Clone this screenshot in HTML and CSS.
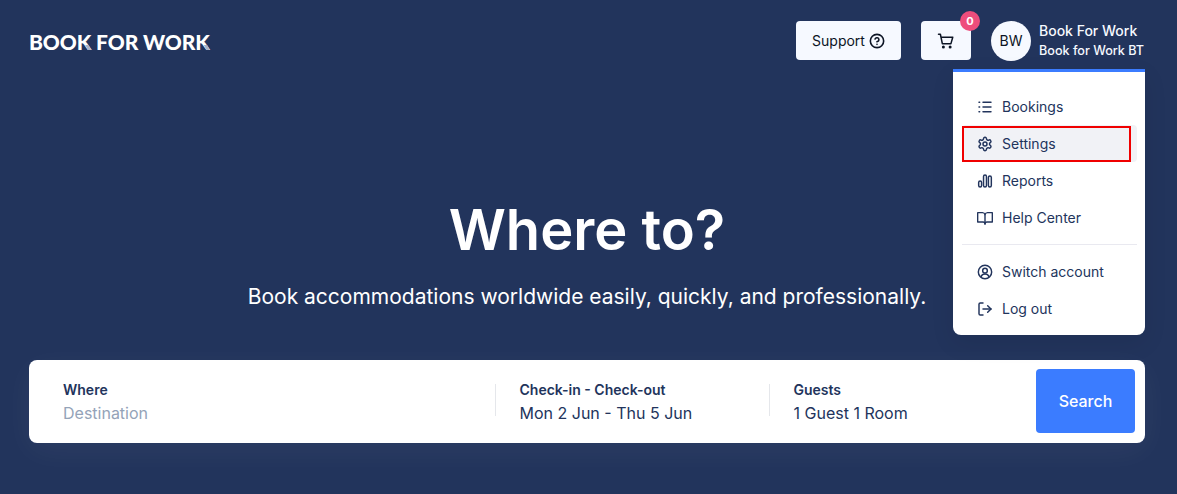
FILE: index.html
```html
<!DOCTYPE html>
<html lang="en">
<head>
    <meta charset="UTF-8">
    <meta name="viewport" content="width=device-width, initial-scale=1.0">
    <title>Book For Work</title>
    <link rel="stylesheet" href="styles.css">
</head>
<body>
    <div class="page">
        <header class="header">
            <a href="#" class="logo">BOO<span class="logo-k">K</span> FOR WOR<span class="logo-k">K</span></a>
            <div class="header-right">
                <button class="btn-light btn-support">
                    Support
                    <svg class="icon-16" viewBox="0 0 24 24" fill="none" stroke="currentColor" stroke-width="2.4" stroke-linecap="round" stroke-linejoin="round"><circle cx="12" cy="12" r="10"/><path d="M9.1 9a3 3 0 0 1 5.8 1c0 2-3 3-3 3"/><path d="M12 17h.01"/></svg>
                </button>
                <button class="btn-light btn-cart">
                    <svg class="icon-18" viewBox="0 0 24 24" fill="none" stroke="currentColor" stroke-width="2" stroke-linecap="round" stroke-linejoin="round"><path d="M2 3h2.5l2.6 12.5h11.5L21 7H5.2"/><circle cx="8.5" cy="20" r="1"/><circle cx="17.5" cy="20" r="1"/></svg>
                    <span class="badge">0</span>
                </button>
                <div class="user">
                    <div class="avatar">BW</div>
                    <div class="user-text">
                        <div class="user-name">Book For Work</div>
                        <div class="user-company">Book for Work BT</div>
                    </div>
                    <div class="menu">
                        <a href="#" class="menu-item">
                            <svg class="icon-16" viewBox="0 0 24 24" fill="none" stroke="currentColor" stroke-width="2.2" stroke-linecap="round"><path d="M9 5h12M9 12h12M9 19h12M3 5h1M3 12h1M3 19h1"/></svg>
                            Bookings
                        </a>
                        <a href="#" class="menu-item active">
                            <svg class="icon-16" viewBox="0 0 24 24" fill="none" stroke="currentColor" stroke-width="2.2" stroke-linecap="round" stroke-linejoin="round"><path d="M12.2 2h-.4a2 2 0 0 0-2 2v.2a2 2 0 0 1-1 1.7l-.4.3a2 2 0 0 1-2 0l-.2-.1a2 2 0 0 0-2.7.7l-.2.4a2 2 0 0 0 .7 2.7l.2.1a2 2 0 0 1 1 1.7v.5a2 2 0 0 1-1 1.8l-.2.1a2 2 0 0 0-.7 2.7l.2.4a2 2 0 0 0 2.7.7l.2-.1a2 2 0 0 1 2 0l.4.3a2 2 0 0 1 1 1.7v.2a2 2 0 0 0 2 2h.4a2 2 0 0 0 2-2v-.2a2 2 0 0 1 1-1.7l.4-.3a2 2 0 0 1 2 0l.2.1a2 2 0 0 0 2.7-.7l.2-.4a2 2 0 0 0-.7-2.7l-.2-.1a2 2 0 0 1-1-1.8v-.5a2 2 0 0 1 1-1.7l.2-.1a2 2 0 0 0 .7-2.7l-.2-.4a2 2 0 0 0-2.7-.7l-.2.1a2 2 0 0 1-2 0l-.4-.3a2 2 0 0 1-1-1.7V4a2 2 0 0 0-2-2z"/><circle cx="12" cy="12" r="3"/></svg>
                            Settings
                        </a>
                        <a href="#" class="menu-item">
                            <svg class="icon-16" viewBox="0 0 24 24" fill="none" stroke="currentColor" stroke-width="2.2"><rect x="2.5" y="12" width="4.4" height="9" rx="2.2"/><rect x="9.8" y="3" width="4.4" height="18" rx="2.2"/><rect x="17.1" y="4.5" width="4.4" height="16.5" rx="2.2"/></svg>
                            Reports
                        </a>
                        <a href="#" class="menu-item">
                            <svg class="icon-16" viewBox="0 0 24 24" fill="none" stroke="currentColor" stroke-width="2.1" stroke-linecap="round" stroke-linejoin="round"><path d="M12 7v14"/><path d="M1 4h7a4 4 0 0 1 4 3 4 4 0 0 1 4-3h7v14h-8a3 3 0 0 0-3 3 3 3 0 0 0-3-3H1z"/></svg>
                            Help Center
                        </a>
                        <div class="menu-divider"></div>
                        <a href="#" class="menu-item">
                            <svg class="icon-16" viewBox="0 0 24 24" fill="none" stroke="currentColor" stroke-width="2.2" stroke-linecap="round"><circle cx="12" cy="12" r="10"/><circle cx="12" cy="10" r="3.5"/><path d="M6 19a6.5 6.5 0 0 1 12 0"/></svg>
                            Switch account
                        </a>
                        <a href="#" class="menu-item">
                            <svg class="icon-16" viewBox="0 0 24 24" fill="none" stroke="currentColor" stroke-width="2.2" stroke-linecap="round" stroke-linejoin="round"><path d="M9 21H5a2 2 0 0 1-2-2V5a2 2 0 0 1 2-2h4"/><path d="M16 17l5-5-5-5"/><path d="M21 12H9"/></svg>
                            Log out
                        </a>
                        <div class="annotation"></div>
                    </div>
                </div>
            </div>
        </header>

        <section class="hero">
            <h1>Where to?</h1>
            <p>Book accommodations worldwide easily, quickly, and professionally.</p>
        </section>

        <form class="search-bar">
            <div class="field field-where">
                <label>Where</label>
                <div class="placeholder">Destination</div>
            </div>
            <div class="field field-dates">
                <label>Check-in - Check-out</label>
                <div class="value">Mon 2 Jun - Thu 5 Jun</div>
            </div>
            <div class="field field-guests">
                <label>Guests</label>
                <div class="value">1 Guest 1 Room</div>
            </div>
            <button type="button" class="btn-search">Search</button>
        </form>
    </div>
</body>
</html>
```

FILE: styles.css
```css
* {
    box-sizing: border-box;
}
html, body {
    margin: 0;
    padding: 0;
}
body {
    font-family: Inter, "Liberation Sans", sans-serif;
    background-color: #22345c;
    color: #22345c;
}
a {
    color: inherit;
    text-decoration: none;
}
button {
    font-family: inherit;
    border: none;
    cursor: pointer;
}
.page {
    height: 494px;
    padding: 21px 32px 0 29px;
    overflow: hidden;
}
.header {
    display: flex;
    justify-content: space-between;
    align-items: flex-start;
    height: 40px;
}
.logo {
    margin-top: 9px;
    font-family: Lato, sans-serif;
    font-size: 21px;
    line-height: 24px;
    font-weight: 900;
    letter-spacing: -0.1px;
    color: #ffffff;
}
.logo-k {
    position: relative;
}
.logo-k::after {
    content: "";
    position: absolute;
    right: 0;
    bottom: 4px;
    width: 6px;
    height: 5px;
    background-color: #aab4ca;
    clip-path: polygon(0 0, 55% 0, 100% 100%, 45% 100%);
}
.header-right {
    display: flex;
    align-items: flex-start;
}
.btn-light {
    display: flex;
    align-items: center;
    justify-content: center;
    height: 39px;
    background-color: #f6f9ff;
    color: #0c1424;
    border-radius: 4px;
    font-size: 14px;
    font-weight: 400;
}
.btn-support {
    width: 105px;
    gap: 4px;
    margin-right: 20px;
}
.btn-cart {
    position: relative;
    width: 50px;
    margin-right: 20px;
}
.icon-16 {
    width: 16px;
    height: 16px;
    flex-shrink: 0;
}
.icon-18 {
    width: 18px;
    height: 18px;
}
.badge {
    position: absolute;
    top: -10px;
    right: -9px;
    width: 20px;
    height: 20px;
    border-radius: 50%;
    background-color: #ee4d7c;
    color: #ffffff;
    font-size: 11px;
    font-weight: 700;
    line-height: 20px;
    text-align: center;
}
.user {
    position: relative;
    display: flex;
    gap: 8px;
    width: 154px;
}
.avatar {
    flex-shrink: 0;
    width: 40px;
    height: 40px;
    border-radius: 50%;
    background-color: #f6f9ff;
    color: #0c1424;
    font-size: 14px;
    line-height: 40px;
    text-align: center;
}
.user-text {
    color: #f6f9ff;
    font-weight: 500;
    white-space: nowrap;
}
.user-name {
    font-size: 14px;
    line-height: 20px;
}
.user-company {
    margin-top: 1px;
    font-size: 12.6px;
    line-height: 18px;
}
.menu {
    position: absolute;
    top: 48px;
    right: 0;
    width: 192px;
    height: 266px;
    padding: 16px 8px 0 9px;
    background-color: #ffffff;
    border-top: 3px solid #3b7cff;
    border-radius: 0 0 8px 8px;
    box-shadow: 0 8px 24px rgba(0, 0, 0, 0.08);
}
.menu-item {
    display: flex;
    align-items: center;
    gap: 9px;
    height: 37px;
    padding-left: 15px;
    border-radius: 4px;
    font-size: 14px;
}
.menu-item.active {
    background-color: #f1f2f6;
}
.menu-divider {
    height: 1px;
    margin: 8px 0;
    background-color: #e9e9f0;
}
.annotation {
    position: absolute;
    top: 54px;
    left: 9px;
    width: 169px;
    height: 36px;
    border: 2px solid #f00000;
}
.hero {
    height: 299px;
    padding-top: 135px;
    text-align: center;
    color: #ffffff;
}
.hero h1 {
    margin: 0;
    font-size: 56px;
    line-height: 68px;
    font-weight: 600;
}
.hero p {
    margin: 19px 0 0 0;
    font-size: 21px;
    line-height: 28px;
}
.search-bar {
    display: flex;
    align-items: center;
    height: 83px;
    padding: 0 10px 0 0;
    background-color: #ffffff;
    border-radius: 8px;
    box-shadow: 0 8px 32px rgba(255, 255, 255, 0.05);
}
.field {
    height: 32px;
    margin-top: -3px;
}
.field label {
    display: block;
    margin-top: -4px;
    font-size: 14px;
    line-height: 20px;
    font-weight: 600;
}
.field-where {
    width: 466px;
    padding-left: 34px;
}
.field-dates {
    width: 274px;
    padding-left: 23.5px;
    border-left: 1px solid #e5e7eb;
}
.field-guests {
    width: 267px;
    padding-left: 23.5px;
    border-left: 1px solid #e5e7eb;
}
.placeholder, .value {
    margin-top: 1px;
    font-size: 16px;
    line-height: 24px;
}
.placeholder {
    color: #94a3b8;
}
.btn-search {
    width: 99px;
    height: 64px;
    margin-top: -2px;
    background-color: #3b7cff;
    color: #ffffff;
    border-radius: 4px;
    font-size: 16px;
    font-weight: 500;
}
```
